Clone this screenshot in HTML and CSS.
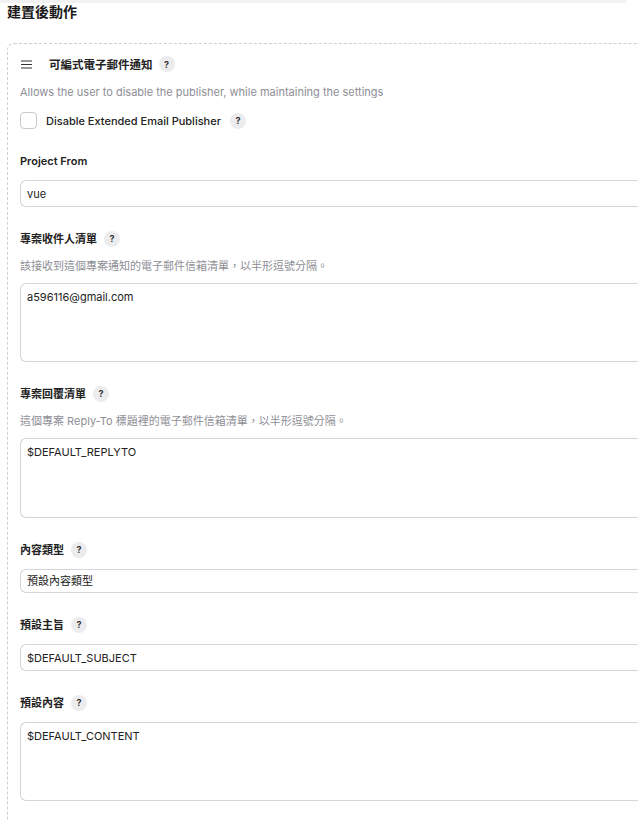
FILE: index.html
```html
<!DOCTYPE html>
<html lang="zh-Hant">
<head>
<meta charset="utf-8">
<link rel="stylesheet" href="styles.css">
</head>
<body>
<div class="topbar"></div>
<div class="page">
  <h2 class="section-title">建置後動作</h2>
  <div class="publisher">
    <div class="pub-head">
      <svg class="handle" width="11" height="9" viewBox="0 0 11 9"><path d="M0 1h11M0 4.5h11M0 8h11" stroke="#333" stroke-width="1.2" fill="none"/></svg>
      <span class="pub-title">可編式電子郵件通知</span>
      <span class="help">?</span>
    </div>
    <div class="desc desc-first">Allows the user to disable the publisher, while maintaining the settings</div>
    <label class="check-row">
      <span class="checkbox"></span>
      <span class="check-label">Disable Extended Email Publisher</span>
      <span class="help">?</span>
    </label>

    <div class="field">
      <div class="label">Project From</div>
      <input class="input" type="text" value="vue">
    </div>

    <div class="field">
      <div class="label">專案收件人清單 <span class="help">?</span></div>
      <div class="desc">該接收到這個專案通知的電子郵件信箱清單，以半形逗號分隔。</div>
      <textarea class="textarea">a596116@gmail.com</textarea>
    </div>

    <div class="field">
      <div class="label">專案回覆清單 <span class="help">?</span></div>
      <div class="desc">這個專案 Reply-To 標題裡的電子郵件信箱清單，以半形逗號分隔。</div>
      <textarea class="textarea tall">$DEFAULT_REPLYTO</textarea>
    </div>

    <div class="field">
      <div class="label">內容類型 <span class="help">?</span></div>
      <div class="select">預設內容類型</div>
    </div>

    <div class="field">
      <div class="label">預設主旨 <span class="help">?</span></div>
      <input class="input" type="text" value="$DEFAULT_SUBJECT">
    </div>

    <div class="field">
      <div class="label">預設內容 <span class="help">?</span></div>
      <textarea class="textarea">$DEFAULT_CONTENT</textarea>
    </div>
  </div>
</div>
</body>
</html>
```

FILE: styles.css
```css
* { box-sizing: border-box; }
html, body {
  margin: 0;
  padding: 0;
  background: #fff;
  overflow: hidden;
}
body {
  font-family: Inter, "Noto Sans CJK TC", sans-serif;
  color: #222;
  font-size: 11px;
}
.topbar {
  height: 3px;
  margin-right: 12px;
  background: #f2f2f3;
}
.page {
  padding-left: 7px;
}
.section-title {
  margin: 0;
  font-size: 14px;
  line-height: 18px;
  font-weight: 700;
  color: #1a1a1a;
}
.publisher {
  margin-top: 22px;
  min-height: 800px;
  border: 1px dashed #cfcfd3;
  border-right: none;
  border-radius: 7px 0 0 0;
  padding: 11px 0 0 12px;
}
.pub-head {
  display: flex;
  align-items: center;
  height: 18px;
}
.handle { margin: 0 17px 0 1px; }
.pub-title {
  font-size: 11.5px;
  font-weight: 700;
  margin-right: 6px;
}
.help {
  display: inline-flex;
  align-items: center;
  justify-content: center;
  width: 16px;
  height: 16px;
  border-radius: 50%;
  background: #ececee;
  color: #333;
  font-family: Inter, sans-serif;
  font-size: 9px;
  font-weight: 700;
  margin-left: 7px;
}
.pub-title + .help { margin-left: 0; }
.desc {
  color: #8e8e96;
  font-size: 11px;
  line-height: 16px;
  margin-top: 11px;
  margin-bottom: 9px;
}
.desc-first { margin-top: 11px; margin-bottom: 12px; }
.check-row {
  display: flex;
  align-items: center;
  height: 17px;
}
.checkbox {
  width: 17px;
  height: 17px;
  border: 1.5px solid #c8c8ce;
  border-radius: 4px;
  margin-right: 9px;
}
.check-label {
  font-size: 11px;
  font-weight: 500;
  color: #222;
}
.check-row .help { margin-left: 9px; }
.field {
  margin-top: 24px;
}
.label {
  display: flex;
  align-items: center;
  font-size: 11px;
  font-weight: 600;
  line-height: 16px;
  height: 16px;
  margin-bottom: 11px;
}
.label + .desc { margin-top: 0; }
.input, .textarea, .select {
  display: block;
  width: 100%;
  border: 1px solid #d4d4da;
  border-right: none;
  border-radius: 6px 0 0 6px;
  background: #fff;
  font-family: Inter, "Noto Sans CJK TC", sans-serif;
  font-size: 11px;
  color: #222;
  padding: 0 6px;
  margin: 0;
  outline: none;
}
.input {
  height: 27px;
}
.select {
  height: 24px;
  line-height: 22px;
}
.textarea {
  height: 79px;
  padding-top: 5px;
  line-height: 16px;
  resize: none;
}
.textarea.tall { height: 80px; }
```
